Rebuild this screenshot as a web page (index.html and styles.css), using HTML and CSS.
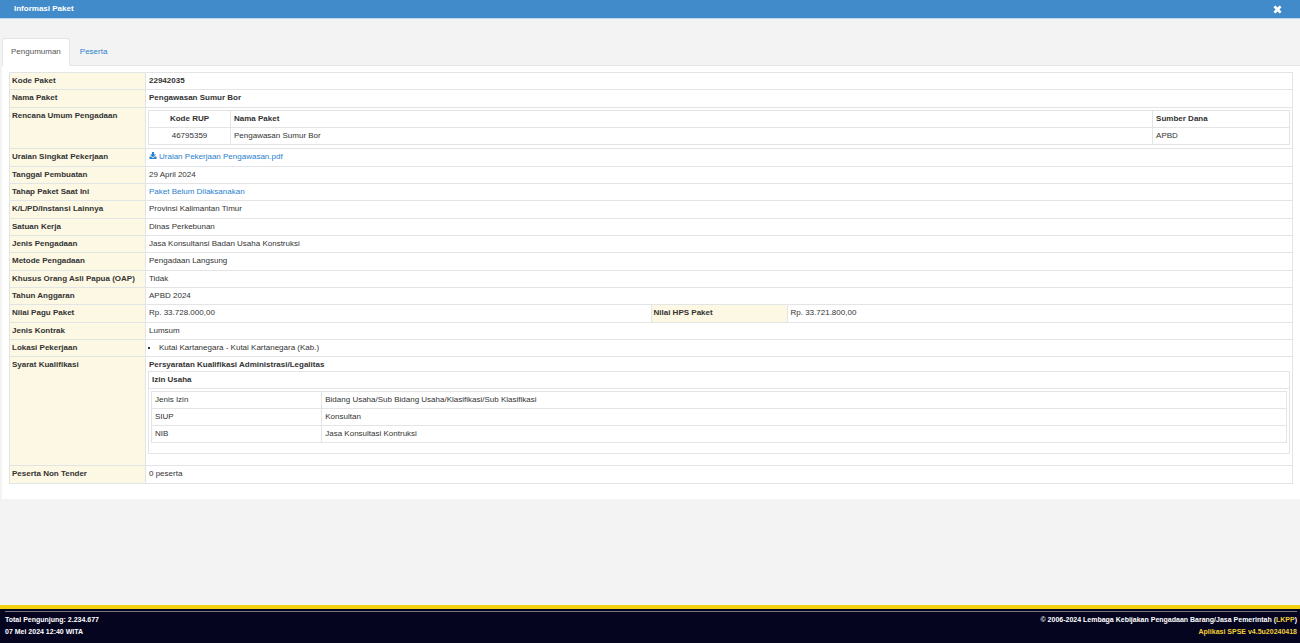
FILE: index.html
```
<!DOCTYPE html>
<html lang="id">
<head>
<meta charset="utf-8">
<title>Informasi Paket</title>
<link rel="stylesheet" href="styles.css">
</head>
<body>
<header class="topbar">
  <h1 class="topbar-title">Informasi Paket</h1>
  <button class="close" type="button" aria-label="Tutup">
    <svg viewBox="0 0 16 16" aria-hidden="true"><path d="M4.2 0.8 8 4.6l3.8-3.8 3.4 3.4L11.4 8l3.8 3.8-3.4 3.4L8 11.4l-3.8 3.8-3.4-3.4L4.600 8 0.8 4.2z"/></svg>
  </button>
</header>
<main class="content">
  <nav class="tabs">
    <a class="tab tab-active" href="#pengumuman">Pengumuman</a>
    <a class="tab" href="#peserta">Peserta</a>
  </nav>
  <section class="panel" id="pengumuman">
    <table class="table detail">
      <colgroup><col class="col-label"><col class="col-value"><col class="col-label"><col class="col-value"></colgroup>
      <tbody>
      <tr><th>Kode Paket</th><td colspan="3"><strong>22942035</strong></td></tr>
      <tr><th>Nama Paket</th><td colspan="3"><strong>Pengawasan Sumur Bor</strong></td></tr>
      <tr><th>Rencana Umum Pengadaan</th><td class="holder" colspan="3">
        <table class="table rup">
          <colgroup><col class="col-code"><col><col class="col-source"></colgroup>
          <thead><tr><th class="center">Kode RUP</th><th>Nama Paket</th><th>Sumber Dana</th></tr></thead>
          <tbody><tr><td class="center">46795359</td><td>Pengawasan Sumur Bor</td><td>APBD</td></tr></tbody>
        </table>
      </td></tr>
      <tr><th>Uraian Singkat Pekerjaan</th><td colspan="3"><a class="download" href="#unduh"><svg viewBox="0 0 16 16" aria-hidden="true"><path d="M5.500 0h5v5.500H15L8 12 1 5.500h4.500zM0 10.500h4L8 14.200l4-3.700h4V16H0z"/></svg>Uraian Pekerjaan Pengawasan.pdf</a></td></tr>
      <tr><th>Tanggal Pembuatan</th><td colspan="3">29 April 2024</td></tr>
      <tr><th>Tahap Paket Saat Ini</th><td colspan="3"><a href="#tahap">Paket Belum Dilaksanakan</a></td></tr>
      <tr><th>K/L/PD/Instansi Lainnya</th><td colspan="3">Provinsi Kalimantan Timur</td></tr>
      <tr><th>Satuan Kerja</th><td colspan="3">Dinas Perkebunan</td></tr>
      <tr><th>Jenis Pengadaan</th><td colspan="3">Jasa Konsultansi Badan Usaha Konstruksi</td></tr>
      <tr><th>Metode Pengadaan</th><td colspan="3">Pengadaan Langsung</td></tr>
      <tr><th>Khusus Orang Asli Papua (OAP)</th><td colspan="3">Tidak</td></tr>
      <tr><th>Tahun Anggaran</th><td colspan="3">APBD 2024</td></tr>
      <tr><th>Nilai Pagu Paket</th><td>Rp. 33.728.000,00</td><th>Nilai HPS Paket</th><td>Rp. 33.721.800,00</td></tr>
      <tr><th>Jenis Kontrak</th><td colspan="3">Lumsum</td></tr>
      <tr><th>Lokasi Pekerjaan</th><td colspan="3"><ul class="places"><li>Kutai Kartanegara - Kutai Kartanegara (Kab.)</li></ul></td></tr>
      <tr><th>Syarat Kualifikasi</th><td class="requirements" colspan="3">
        <strong>Persyaratan Kualifikasi Administrasi/Legalitas</strong>
        <table class="table">
          <tbody>
          <tr><th>Izin Usaha</th></tr>
          <tr><td class="permits">
            <table class="table">
              <colgroup><col class="col-permit"><col></colgroup>
              <tbody>
              <tr><td>Jenis Izin</td><td>Bidang Usaha/Sub Bidang Usaha/Klasifikasi/Sub Klasifikasi</td></tr>
              <tr><td>SIUP</td><td>Konsultan</td></tr>
              <tr><td>NIB</td><td>Jasa Konsultasi Kontruksi</td></tr>
              </tbody>
            </table>
          </td></tr>
          </tbody>
        </table>
      </td></tr>
      <tr><th>Peserta Non Tender</th><td colspan="3">0 peserta</td></tr>
      </tbody>
    </table>
  </section>
</main>
<footer class="footer">
  <div class="footer-inner">
    <div>Total Pengunjung: 2.234.677<br>07 Mei 2024 12:40 WITA</div>
    <div class="credit">© 2006-2024 Lembaga Kebijakan Pengadaan Barang/Jasa Pemerintah (<a href="#lkpp">LKPP</a>)<br><span class="version">Aplikasi SPSE v4.5u20240418</span></div>
  </div>
</footer>
</body>
</html>
```

FILE: styles.css
```
* { box-sizing: border-box; }

body {
  display: flex;
  flex-direction: column;
  min-height: 100vh;
  margin: 0;
  background: #f3f3f3;
  color: #333;
  font: 8px/12px "Liberation Sans", Arial, sans-serif;
}

a { color: #2a80cc; text-decoration: none; }

.topbar {
  display: flex;
  align-items: center;
  justify-content: space-between;
  height: 19px;
  padding: 0 18px 0 14px;
  background: #428bca;
  border-bottom: 1px solid #b9d7ee;
  color: #fff;
}
.topbar-title { margin: 0; font-size: 8px; line-height: 12px; }
.close {
  display: flex;
  padding: 0;
  border: 0;
  background: none;
  color: inherit;
  cursor: pointer;
}
.close svg { width: 9px; height: 9px; fill: currentColor; }

.content { flex: 1; padding: 19px 0 0 2px; }

.tabs { display: flex; gap: 1px; border-bottom: 1px solid #e2e4e6; }
.tab {
  margin-bottom: -1px;
  padding: 7px 8px;
  border: 1px solid transparent;
}
.tab-active {
  background: #fff;
  border-color: #e2e4e6 #e2e4e6 #fff;
  border-radius: 3px 3px 0 0;
  color: #555;
}

.panel { padding: 6px 7px 15px; background: #fff; }

.table {
  width: 100%;
  border-collapse: collapse;
  table-layout: fixed;
}
.table th, .table td {
  height: 17px;
  padding: 2px 3px;
  border: 1px solid #e2e4e6;
  text-align: left;
  vertical-align: top;
}
.table .center { text-align: center; }

.detail > tbody > tr > th { padding-left: 2px; background: #fcf8e3; }
.detail > tbody > tr:nth-child(2) > td,
.detail > tbody > tr:nth-child(3n + 4) > td,
.detail > tbody > tr:last-child > td { height: 18px; }
.detail .holder { padding: 2px 2px 3px; }
.detail .requirements { padding: 2px 2px 11px; }
.detail .permits { padding: 2px 2px 10px; }
.requirements strong { display: block; padding-left: 1px; }

.col-label { width: 136px; }
.col-code { width: 82px; }
.col-source { width: 12%; }
.col-permit { width: 15%; }

.download svg {
  width: 8px;
  height: 7px;
  margin-right: 2px;
  fill: currentColor;
}

.places { margin: 0; padding-left: 10px; list-style: square; }

.footer {
  padding: 2px 3px 5px 5px;
  background: #05051f;
  border-top: 4px solid #f3d112;
  color: #fff;
}
.footer-inner {
  display: flex;
  justify-content: space-between;
  padding-top: 2px;
  border-top: 1px solid #77777f;
  font-size: 7px;
  font-weight: bold;
}
.credit { text-align: right; }
.credit a, .version { color: #f0cf35; }
```
